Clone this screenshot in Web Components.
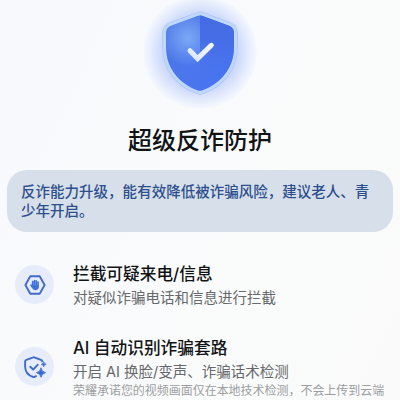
<!DOCTYPE html>
<html lang="zh-CN">
<head>
<meta charset="utf-8">
<title>超级反诈防护</title>
<style>
html,body{margin:0;height:100%;overflow:hidden}
body{font-family:Inter,"Noto Sans CJK SC",sans-serif}
</style>
</head>
<body>
<guard-page>
  <guard-hero slot="hero">超级反诈防护</guard-hero>
  <guard-notice slot="notice">反诈能力升级，能有效降低被诈骗风险，建议老人、青<br>少年开启。</guard-notice>
  <guard-feature>
    <hand-icon slot="icon"></hand-icon>
    <span slot="title">拦截可疑来电/信息</span>
    <span slot="desc">对疑似诈骗电话和信息进行拦截</span>
  </guard-feature>
  <guard-feature>
    <scan-icon slot="icon"></scan-icon>
    <span slot="title">AI 自动识别诈骗套路</span>
    <span slot="desc">开启 AI 换脸/变声、诈骗话术检测</span>
    <span slot="note">荣耀承诺您的视频画面仅在本地技术检测，不会上传到云端</span>
  </guard-feature>
</guard-page>
<script>
const define = (name, html) => customElements.define(name, class extends HTMLElement {
  constructor() {
    super();
    this.attachShadow({ mode: 'open' }).innerHTML = html;
  }
});

define('guard-page', `
<style>
:host{display:flex;flex-direction:column;width:400px;height:400px;overflow:hidden;
background:linear-gradient(115deg,#f7f9fd 0%,#f8fafc 35%,#fafbfb 60%,#fafafb 100%)}
.list{display:flex;flex-direction:column;gap:25px;padding:28px 0 0 15px}
</style>
<slot name="hero"></slot><slot name="notice"></slot><div class="list"><slot></slot></div>`);

define('guard-hero', `
<style>
:host{display:flex;flex-direction:column;align-items:center;height:170px;flex:none}
svg{display:block;flex:none}
.t{font-size:24px;line-height:36px;font-weight:500;color:#111315;margin-top:8px;white-space:nowrap}
</style>
<svg width="140" height="115" viewBox="130 0 140 115">
  <defs>
    <radialGradient id="halo" gradientUnits="userSpaceOnUse" cx="200" cy="52" r="57">
      <stop offset="0.55" stop-color="#c0cffa"/><stop offset="0.72" stop-color="#d3defb"/>
      <stop offset="0.86" stop-color="#e5ecfc"/><stop offset="0.95" stop-color="#f0f4fd"/><stop offset="1" stop-color="#f5f8fe"/>
    </radialGradient>
    <linearGradient id="body" x1="0" y1="0" x2="1" y2="1">
      <stop offset="0" stop-color="#4b79df"/><stop offset="0.5" stop-color="#4b76ed"/><stop offset="1" stop-color="#4672f3"/>
    </linearGradient>
    <linearGradient id="right" x1="0" y1="0" x2="0" y2="1">
      <stop offset="0" stop-color="#436be0"/><stop offset="0.6" stop-color="#486fea"/><stop offset="1" stop-color="#4b74f5"/>
    </linearGradient>
    <radialGradient id="shine" gradientUnits="userSpaceOnUse" cx="188" cy="38" r="28">
      <stop offset="0" stop-color="#7ca8f6"/><stop offset="1" stop-color="#7ca8f6" stop-opacity="0"/>
    </radialGradient>
    <linearGradient id="fade" x1="0" y1="0" x2="0" y2="1">
      <stop offset="0.35" stop-color="#fff"/><stop offset="0.75" stop-color="#000"/>
    </linearGradient>
    <mask id="m"><rect x="200" y="10" width="40" height="85" fill="url(#fade)"/></mask>
    <linearGradient id="tick" x1="0" y1="1" x2="1" y2="0">
      <stop offset="0" stop-color="#dce7ff"/><stop offset="1" stop-color="#f5f9ff"/>
    </linearGradient>
    <clipPath id="shape"><path d="M198 15.8Q200 15 202 15.8L229 25.8Q234 27.6 234 33V47C234 69 220 84 202 90.5Q200 91.2 198 90.5C180 84 166 69 166 47V33Q166 27.6 171 25.8Z"/></clipPath>
  </defs>
  <circle cx="200" cy="52" r="56.5" fill="url(#halo)"/>
  <path d="M198 15.8Q200 15 202 15.8L229 25.8Q234 27.6 234 33V47C234 69 220 84 202 90.5Q200 91.2 198 90.5C180 84 166 69 166 47V33Q166 27.6 171 25.8Z" fill="#b0c5f4" stroke="#b0c5f4" stroke-width="7.6" stroke-linejoin="round"/>
  <path d="M198 15.8Q200 15 202 15.8L229 25.8Q234 27.6 234 33V47C234 69 220 84 202 90.5Q200 91.2 198 90.5C180 84 166 69 166 47V33Q166 27.6 171 25.8Z" fill="#c0daff" stroke="#c0d7fc" stroke-width="6.2" stroke-linejoin="round"/>
  <g clip-path="url(#shape)">
    <rect x="160" y="10" width="80" height="85" fill="url(#body)"/>
    <rect x="160" y="10" width="80" height="85" fill="url(#shine)"/>
    <rect x="200" y="10" width="40" height="85" fill="url(#right)" mask="url(#m)"/>
  </g>
  <path d="M190 50.7L197.6 58.6L211.3 45.3" fill="none" stroke="url(#tick)" stroke-width="5" stroke-linecap="round"/>
</svg>
<div class="t"><slot></slot></div>`);

define('guard-notice', `
<style>
:host{display:block;flex:none;box-sizing:border-box;height:62px;margin:0 7px;padding:13px 0 0 14px;border-radius:20px;
background:#d7dfea;color:#2d4f8c;font-size:14.52px;line-height:19.3px;font-weight:500;white-space:nowrap}
</style><slot></slot>`);

define('guard-feature', `
<style>
:host{display:grid;grid-template-columns:38px 1fr;column-gap:20px;align-items:center}
.i{display:flex;align-items:center;justify-content:center;width:39px;height:39px;border-radius:50%;background:#e6ecfa}
.c{display:flex;flex-direction:column;white-space:nowrap;padding-top:2px}
.t{font-size:16.7px;line-height:24px;font-weight:500;color:#111315}
.d{font-size:14.5px;line-height:23px;color:#66686b}
.n{font-size:11.97px;line-height:16px;color:#9c9ea0}
</style>
<div class="i"><slot name="icon"></slot></div>
<div class="c"><div class="t"><slot name="title"></slot></div><div class="d"><slot name="desc"></slot></div><div class="n"><slot name="note"></slot></div></div>`);

define('hand-icon', `
<style>:host,svg{display:block}</style>
<svg width="24" height="24" viewBox="0 0 24 24">
  <path d="M7.3 3.2H16.7L21.6 12L16.7 20.8H7.3L2.4 12Z" fill="none" stroke="#436bc8" stroke-width="1.9" stroke-linejoin="round"/>
  <g transform="translate(1.2 1.2) scale(.9)">
  <path d="M9.4 8.2V13M11.4 7.1V13M13.4 7.3V13M15.4 8.7V14M7.6 12.2L9.4 14.6" stroke="#4270dc" stroke-width="1.8" stroke-linecap="round" fill="none"/>
  <path d="M8.6 12H16.2V14.3Q16.2 17.7 12.6 17.7Q10.2 17.7 9 15.6L7.7 13.3Z" fill="#4270dc"/>
  </g>
</svg>`);

define('scan-icon', `
<style>:host{display:block;padding-bottom:0}svg{display:block}</style>
<svg width="24" height="24" viewBox="0 0 24 24" fill="none" stroke="#426bc8" stroke-width="1.9" stroke-linecap="round" stroke-linejoin="round">
  <path d="M19.1 6.2Q19 5.2 18 4.8L11.3 2.3Q10.8 2.1 10.3 2.3L3.4 4.8Q2.1 5.3 2.1 6.6V11.2C2.1 16.4 5.2 20.4 10.2 22Q10.8 22.2 11.5 21.9L13.1 21.2"/>
  <path d="M7.3 11.8L10.2 14.5L14.7 9.8"/>
  <path d="M18 13.2Q18.7 17 22.5 17.7Q18.7 18.4 18 22.2Q17.3 18.4 13.5 17.7Q17.3 17 18 13.2Z" fill="#3d69d4" stroke="#3d69d4" stroke-width=".9"/>
  <path d="M20.7 6.7Q21.1 8.9 23.3 9.3Q21.1 9.7 20.7 11.9Q20.3 9.7 18.1 9.3Q20.3 8.9 20.7 6.7Z" fill="#4b73d0" stroke="#4b73d0" stroke-width=".6"/>
</svg>`);
</script>
</body>
</html>
